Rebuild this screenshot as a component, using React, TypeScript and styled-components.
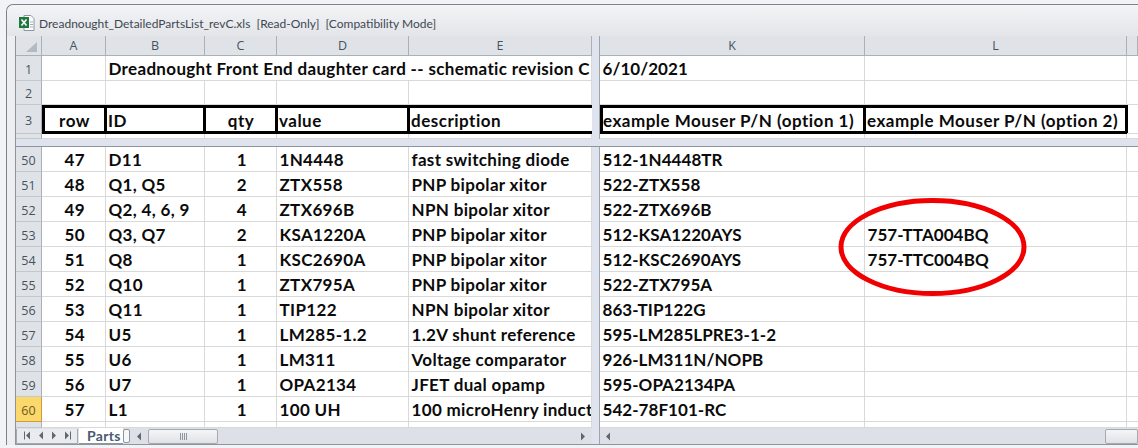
import React from 'react';
import styled, { createGlobalStyle } from 'styled-components';

const GlobalStyle = createGlobalStyle`
  html, body { margin: 0; padding: 0; background: #f1f3f6; }
  body { width: 1138px; height: 448px; overflow: hidden; }
`;

const COLUMNS = '26px 64px 99px 72px 132px 183px 8px 265px 262px 1fr';

const Page = styled.div`
  position: relative;
  width: 1138px;
  height: 448px;
  padding: 4px 0 0 6px;
  box-sizing: border-box;
  overflow: hidden;
`;
const Frame = styled.div`
  border-top: 1px solid #7b838c;
  border-left: 1px solid #7b838c;
  border-top-left-radius: 7px;
  background: #eceef2;
`;
const TitleBar = styled.div`
  height: 31px;
  padding: 5px 0 0 12px;
  box-sizing: border-box;
  display: flex;
  align-items: center;
  gap: 4px;
  background: linear-gradient(#f3f4f6, #e3e5e9);
  border-top-left-radius: 7px;
`;
const TitleText = styled.span`
  font: 12px Lato, sans-serif;
  white-space: pre;
  color: #3f4852;
`;
const WorkArea = styled.div`
  padding-left: 8px;
`;
const Sheet = styled.div`
  border-left: 1px solid #8d949c;
  background: #fff;
`;
const Row = styled.div<{ $h: number }>`
  display: grid;
  grid-template-columns: ${COLUMNS};
  height: ${(p) => p.$h}px;
`;
const ColHead = styled.div`
  background: #dfe3e8;
  border-right: 1px solid #aab0b7;
  border-bottom: 1px solid #aab0b7;
  display: flex;
  align-items: center;
  justify-content: center;
  font: 12.5px "Open Sans", sans-serif;
  color: #48525e;
`;
const Corner = styled(ColHead)`
  justify-content: flex-end;
  align-items: flex-end;
  padding: 0 4px 3px 0;
`;
const CornerMark = styled.div`
  width: 11px;
  height: 10px;
  background: #b4bac2;
  clip-path: polygon(100% 0, 100% 100%, 0 100%);
`;
const RowHead = styled.div<{ $active?: boolean }>`
  background: ${(p) => (p.$active ? '#fbd86b' : '#dfe3e8')};
  border-right: 1px solid ${(p) => (p.$active ? '#d29a38' : '#aab0b7')};
  border-bottom: 1px solid ${(p) => (p.$active ? '#d29a38' : '#c3c8ce')};
  display: flex;
  align-items: center;
  justify-content: center;
  padding-top: 2px;
  box-sizing: border-box;
  font: 12.5px "Open Sans", sans-serif;
  color: ${(p) => (p.$active ? '#6d5a28' : '#48525e')};
`;
const Cell = styled.div<{ $center?: boolean; $span?: number; $tight?: boolean }>`
  grid-column: ${(p) => (p.$span ? `span ${p.$span}` : 'auto')};
  border-right: 1px solid #d9d9d9;
  border-bottom: 1px solid #d9d9d9;
  padding: 1px 0 0 2.5px;
  box-sizing: border-box;
  min-width: 0;
  overflow: hidden;
  white-space: nowrap;
  display: flex;
  align-items: center;
  justify-content: ${(p) => (p.$center ? 'center' : 'flex-start')};
  font: bold 17px Lato, sans-serif;
  letter-spacing: ${(p) => (p.$tight ? 0.05 : 0.33)}px;
  color: #0b0b0b;
`;
const PlainEdge = styled(Cell)`
  border-right: none;
`;
const BoxCell = styled(Cell)<{ $first?: boolean; $open?: boolean }>`
  border-style: solid;
  border-color: #000;
  border-width: 3px ${(p) => (p.$open ? 0 : 3)}px 3px ${(p) => (p.$first ? 3 : 0)}px;
  padding: 1px 0 0 ${(p) => (p.$first ? 0 : 2)}px;
  margin-right: ${(p) => (p.$open ? 0 : -1)}px;
  letter-spacing: 0.5px;
`;
const Split = styled.div`
  background: #dfe3ee;
  border-right: 1px solid #9ea4ac;
`;
const Band = styled.div`
  height: 7px;
  background: #dfe3ee;
  border-bottom: 1px solid #8f959c;
`;
const TabBar = styled.div`
  display: grid;
  grid-template-columns: 576px 8px 1fr;
  height: 16px;
  background: #dde1e7;
`;
const BarSide = styled.div`
  display: flex;
  align-items: center;
  min-width: 0;
`;
const NavBox = styled.div`
  width: 62px;
  height: 15px;
  box-sizing: border-box;
  flex: none;
  display: flex;
  align-items: center;
  justify-content: space-around;
  padding: 0 4px;
  border: 1px solid #a4aab2;
  border-top: none;
  background: #e9ebef;
`;
const Tab = styled.div`
  width: 44px;
  height: 16px;
  margin-left: 1px;
  flex: none;
  box-sizing: border-box;
  padding-left: 8px;
  background: #fff;
  border-bottom: 1px solid #8f959c;
  font: bold 14px Lato, sans-serif;
  letter-spacing: 0.3px;
  line-height: 15px;
  color: #4a5a70;
  overflow: hidden;
`;
const TabGrip = styled.div`
  width: 7px;
  height: 14px;
  flex: none;
  box-sizing: border-box;
  border: 1px solid #8f959c;
  border-radius: 2px;
  background: #f6f7f9;
`;
const ScrollArrow = styled.div<{ $gap: number }>`
  display: flex;
  flex: none;
  margin: 0 ${(p) => p.$gap}px;
`;
const Thumb = styled.div<{ $w: number }>`
  width: ${(p) => p.$w}px;
  height: 15px;
  flex: none;
  box-sizing: border-box;
  border: 1px solid #a4aab2;
  border-radius: 2px;
  background: linear-gradient(#f4f5f7, #dfe2e7);
  display: flex;
  align-items: center;
  justify-content: center;
`;
const Spacer = styled.div`
  flex: 1;
`;
const BottomLine = styled.div`
  height: 1px;
  background: #8f959c;
`;
const Marker = styled.svg`
  position: absolute;
  left: 836px;
  top: 196px;
`;

type Part = [number, number, string, number, string, string, string, string?];

const PARTS: Part[] = [
  [50, 47, 'D11', 1, '1N4448', 'fast switching diode', '512-1N4448TR'],
  [51, 48, 'Q1, Q5', 2, 'ZTX558', 'PNP bipolar xitor', '522-ZTX558'],
  [52, 49, 'Q2, 4, 6, 9', 4, 'ZTX696B', 'NPN bipolar xitor', '522-ZTX696B'],
  [53, 50, 'Q3, Q7', 2, 'KSA1220A', 'PNP bipolar xitor', '512-KSA1220AYS', '757-TTA004BQ'],
  [54, 51, 'Q8', 1, 'KSC2690A', 'PNP bipolar xitor', '512-KSC2690AYS', '757-TTC004BQ'],
  [55, 52, 'Q10', 1, 'ZTX795A', 'PNP bipolar xitor', '522-ZTX795A'],
  [56, 53, 'Q11', 1, 'TIP122', 'NPN bipolar xitor', '863-TIP122G'],
  [57, 54, 'U5', 1, 'LM285-1.2', '1.2V shunt reference', '595-LM285LPRE3-1-2'],
  [58, 55, 'U6', 1, 'LM311', 'Voltage comparator', '926-LM311N/NOPB'],
  [59, 56, 'U7', 1, 'OPA2134', 'JFET dual opamp', '595-OPA2134PA'],
  [60, 57, 'L1', 1, '100 UH', '100 microHenry inductor', '542-78F101-RC'],
];

const ExcelIcon = () => (
  <svg width="16" height="16" viewBox="0 0 16 16">
    <path d="M5 .5h7l3 3v12H5z" fill="#fff" stroke="#8a97a8" />
    <path d="M11 7h3M11 9.5h3M11 12h3" stroke="#9fb0c4" />
    <rect x="0" y="2" width="10" height="11" fill="#1e7a3c" />
    <path d="M2.5 4.5 7.5 10.5M7.5 4.5 2.5 10.5" stroke="#fff" strokeWidth="1.6" />
  </svg>
);

const Arrow = ({ dir, stop }: { dir: 'l' | 'r'; stop?: boolean }) => (
  <svg width="8" height="9" viewBox="0 0 8 9">
    <path d={dir === 'l' ? 'M6 0.5v8L2 4.5z' : 'M2 0.5v8l4-4z'} fill="#5f6872" />
    {stop && <path d={dir === 'l' ? 'M.5 .5v8' : 'M7.5 .5v8'} stroke="#5f6872" />}
  </svg>
);

const Grip = () => (
  <svg width="7" height="7" viewBox="0 0 7 7">
    <path d="M.5 0v7M2.5 0v7M4.5 0v7M6.5 0v7" stroke="#8f959c" />
  </svg>
);

const App = () => {
  return (
    <Page>
      <GlobalStyle />
      <Frame>
        <TitleBar>
          <ExcelIcon />
          <TitleText>Dreadnought_DetailedPartsList_revC.xls  [Read-Only]  [Compatibility Mode]</TitleText>
        </TitleBar>
        <WorkArea>
          <Sheet>
            <Row $h={20}>
              <Corner><CornerMark /></Corner>
              <ColHead>A</ColHead>
              <ColHead>B</ColHead>
              <ColHead>C</ColHead>
              <ColHead>D</ColHead>
              <ColHead>E</ColHead>
              <Split />
              <ColHead>K</ColHead>
              <ColHead>L</ColHead>
              <ColHead />
            </Row>
            <Row $h={25}>
              <RowHead>1</RowHead>
              <Cell />
              <Cell $span={4}>Dreadnought Front End daughter card -- schematic revision C</Cell>
              <Split />
              <Cell $tight>6/10/2021</Cell>
              <Cell />
              <PlainEdge />
            </Row>
            <Row $h={24}>
              <RowHead>2</RowHead>
              <Cell />
              <Cell />
              <Cell />
              <Cell />
              <Cell />
              <Split />
              <Cell />
              <Cell />
              <PlainEdge />
            </Row>
            <Row $h={29}>
              <RowHead>3</RowHead>
              <BoxCell $first $center>row</BoxCell>
              <BoxCell>ID</BoxCell>
              <BoxCell $center>qty</BoxCell>
              <BoxCell>value</BoxCell>
              <BoxCell $open>description</BoxCell>
              <Split />
              <BoxCell $first>example Mouser P/N (option 1)</BoxCell>
              <BoxCell>example Mouser P/N (option 2)</BoxCell>
              <PlainEdge />
            </Row>
            <Row $h={5}>
              <RowHead />
              <Cell />
              <Cell />
              <Cell />
              <Cell />
              <Cell />
              <Split />
              <Cell />
              <Cell />
              <PlainEdge />
            </Row>
            <Band />
            {PARTS.map(([line, row, id, qty, value, desc, opt1, opt2]) => (
              <Row $h={25} key={line}>
                <RowHead $active={line === 60}>{line}</RowHead>
                <Cell $center>{row}</Cell>
                <Cell>{id}</Cell>
                <Cell $center>{qty}</Cell>
                <Cell>{value}</Cell>
                <Cell>{desc}</Cell>
                <Split />
                <Cell $tight>{opt1}</Cell>
                <Cell $tight>{opt2}</Cell>
                <PlainEdge />
              </Row>
            ))}
            <Row $h={6}>
              <RowHead />
              <Cell />
              <Cell />
              <Cell />
              <Cell />
              <Cell />
              <Split />
              <Cell />
              <Cell />
              <PlainEdge />
            </Row>
            <TabBar>
              <BarSide>
                <NavBox>
                  <Arrow dir="l" stop />
                  <Arrow dir="l" />
                  <Arrow dir="r" />
                  <Arrow dir="r" stop />
                </NavBox>
                <Tab>Parts</Tab>
                <TabGrip />
                <ScrollArrow $gap={5}><Arrow dir="l" /></ScrollArrow>
                <Thumb $w={70}><Grip /></Thumb>
                <Spacer />
                <ScrollArrow $gap={5}><Arrow dir="r" /></ScrollArrow>
              </BarSide>
              <Split />
              <BarSide>
                <ScrollArrow $gap={4}><Arrow dir="l" /></ScrollArrow>
                <Spacer />
                <Thumb $w={33} />
              </BarSide>
            </TabBar>
            <BottomLine />
          </Sheet>
        </WorkArea>
      </Frame>
      <Marker width="194" height="104" viewBox="0 0 194 104">
        <ellipse cx="96.5" cy="51" rx="91.5" ry="46.5" fill="none" stroke="#f00000" strokeWidth="5" />
      </Marker>
    </Page>
  );
};

export default App;
